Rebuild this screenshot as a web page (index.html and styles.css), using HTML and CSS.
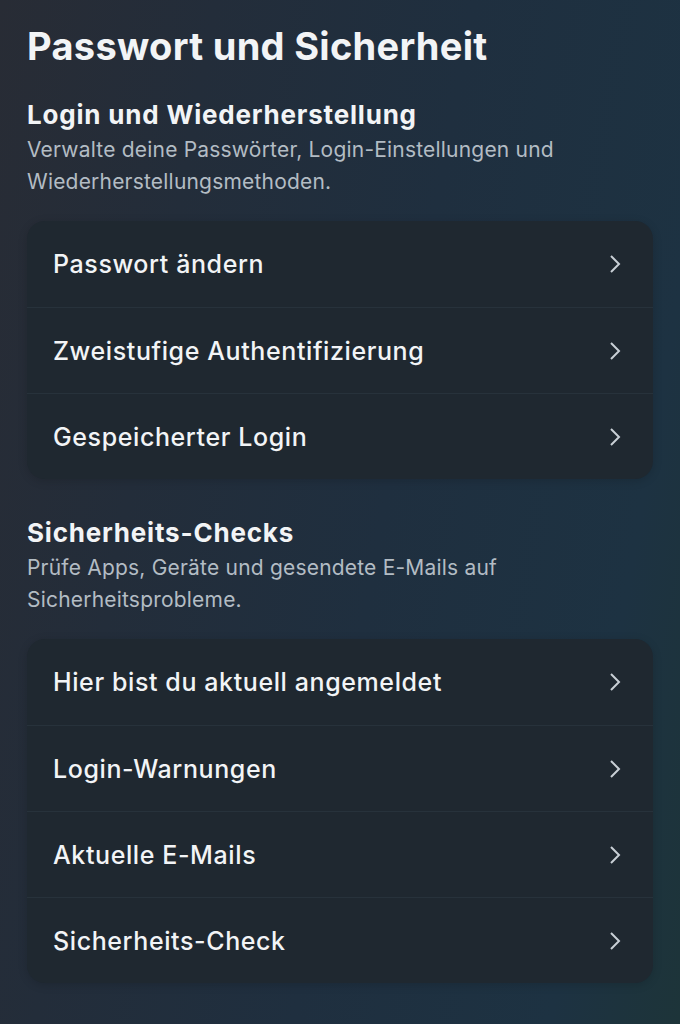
FILE: index.html
```html
<!DOCTYPE html>
<html lang="de">
<head>
  <meta charset="UTF-8">
  <title>Passwort und Sicherheit</title>
  <link rel="stylesheet" href="styles.css">
</head>
<body>
  <div class="page">
    <h1>Passwort und Sicherheit</h1>

    <section class="section">
      <h2>Login und Wiederherstellung</h2>
      <p class="desc">Verwalte deine Passwörter, Login-Einstellungen und Wiederherstellungsmethoden.</p>
      <ul class="card">
        <li class="row"><span>Passwort ändern</span><svg class="chev" viewBox="0 0 12 20"><path d="M2 2l8 8-8 8"/></svg></li>
        <li class="row"><span>Zweistufige Authentifizierung</span><svg class="chev" viewBox="0 0 12 20"><path d="M2 2l8 8-8 8"/></svg></li>
        <li class="row"><span>Gespeicherter Login</span><svg class="chev" viewBox="0 0 12 20"><path d="M2 2l8 8-8 8"/></svg></li>
      </ul>
    </section>

    <section class="section">
      <h2>Sicherheits-Checks</h2>
      <p class="desc">Prüfe Apps, Geräte und gesendete E-Mails auf Sicherheitsprobleme.</p>
      <ul class="card">
        <li class="row"><span>Hier bist du aktuell angemeldet</span><svg class="chev" viewBox="0 0 12 20"><path d="M2 2l8 8-8 8"/></svg></li>
        <li class="row"><span>Login-Warnungen</span><svg class="chev" viewBox="0 0 12 20"><path d="M2 2l8 8-8 8"/></svg></li>
        <li class="row"><span>Aktuelle E-Mails</span><svg class="chev" viewBox="0 0 12 20"><path d="M2 2l8 8-8 8"/></svg></li>
        <li class="row"><span>Sicherheits-Check</span><svg class="chev" viewBox="0 0 12 20"><path d="M2 2l8 8-8 8"/></svg></li>
      </ul>
    </section>
  </div>
</body>
</html>
```

FILE: styles.css
```css
html, body { margin: 0; height: 100%; }
body {
  font-family: Inter, "Noto Sans", sans-serif;
  color: #f2f4f6;
  background: linear-gradient(100deg, #282c35 0%, #232d3a 25%, #1f2f3f 55%, #1d3242 85%, #1d3439 100%);
  min-height: 1024px;
}
.page { padding: 24px 27px 0 27px; }
h1 { margin: 0; font-size: 38px; font-weight: 700; line-height: 44px; letter-spacing: 0.3px; }
.section { margin-top: 31px; }
.section + .section { margin-top: 38px; }
h2 { margin: 0; font-size: 26px; font-weight: 700; line-height: 32px; letter-spacing: 0.8px; }
.desc { margin: 3px 0 0 0; font-size: 21px; line-height: 32px; color: #b3bcc4; letter-spacing: 0.2px; max-width: 560px; }
.card {
  list-style: none;
  margin: 23px 0 0 0;
  padding: 0;
  background: #1f2830;
  border-radius: 18px;
  box-shadow: 0 2px 10px rgba(0, 0, 0, 0.15);
}
.row {
  box-sizing: border-box;
  display: flex;
  align-items: center;
  justify-content: space-between;
  height: 86px;
  padding: 0 32px 0 26px;
  font-size: 25px;
  font-weight: 500;
  letter-spacing: 0.6px;
  border-top: 1px solid #27323b;
}
.row:first-child { border-top: none; }
.chev { width: 12px; height: 20px; fill: none; stroke: #c9d0d6; stroke-width: 2; }
```
